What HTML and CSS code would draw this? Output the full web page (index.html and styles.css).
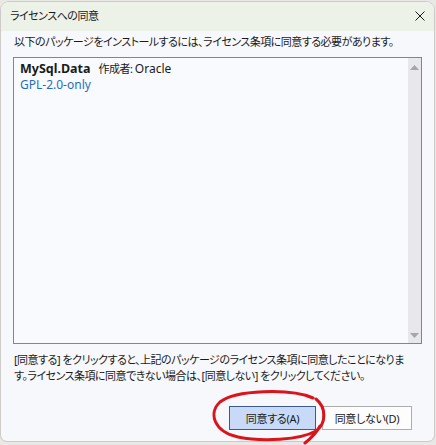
FILE: index.html
```html
<!DOCTYPE html>
<html lang="ja">
<head>
<meta charset="utf-8">
<title>ライセンスへの同意</title>
<link rel="stylesheet" href="styles.css">
</head>
<body>
<div class="dialog">
  <div class="titlebar">
    <span class="title">ライセンスへの同意</span>
    <svg class="close" width="10" height="10" viewBox="0 0 10 10"><path d="M0.5 0.5 L9.5 9.5 M9.5 0.5 L0.5 9.5" stroke="#1b1b1b" stroke-width="1" fill="none"/></svg>
  </div>
  <div class="content">
    <p class="intro">以下のパッケージをインストールするには、ライセンス条項に同意する必要があります。</p>
    <div class="listbox">
      <div class="items">
        <div class="pkg"><span class="pkg-name">MySql.Data</span><span class="pkg-author">作成者:&nbsp;<span class="latin">Oracle</span></span></div>
        <div class="pkg-license">GPL-2.0-only</div>
      </div>
      <div class="scrollbar">
        <svg class="arrow" width="9" height="5" viewBox="0 0 9 5"><path d="M0 5 L4.5 0 L9 5 Z" fill="#a6a6a6"/></svg>
        <svg class="arrow" width="9" height="5" viewBox="0 0 9 5"><path d="M0 0 L4.5 5 L9 0 Z" fill="#a6a6a6"/></svg>
      </div>
    </div>
    <p class="note">[同意する] をクリックすると、上記のパッケージのライセンス条項に同意したことになりま<br>す。ライセンス条項に同意できない場合は、[同意しない] をクリックしてください。</p>
    <div class="buttons">
      <button class="btn btn-primary">同意する(A)</button>
      <button class="btn">同意しない(D)</button>
    </div>
  </div>
</div>
<svg class="scribble" width="436" height="445" viewBox="0 0 436 445">
  <path d="M313 398 C290 388, 235 390, 220 402 C208 413, 214 432, 238 437 C262 442, 300 440, 316 431 C326 424, 327 408, 316 399 M320 426 C316 434, 310 439, 305 443" stroke="#d9141b" stroke-width="3" fill="none" stroke-linecap="round"/>
</svg>
</body>
</html>
```
FILE: styles.css
```css
html, body {
  margin: 0;
  padding: 0;
}
body {
  width: 436px;
  height: 445px;
  background: #e9e8e4;
  position: relative;
  overflow: hidden;
  font-family: "Noto Sans", "Noto Sans CJK JP", sans-serif;
  font-size: 11px;
  letter-spacing: -0.5px;
  color: #1a1a1a;
  font-feature-settings: "palt";
}
.dialog {
  position: absolute;
  left: 1px;
  top: 2px;
  width: 433px;
  height: 439px;
  border-radius: 8px 8px 6px 6px;
  background: #f7f8fc;
  box-shadow: 0 0 0 1px rgba(0,0,0,0.12);
  overflow: hidden;
  display: flex;
  flex-direction: column;
}
.titlebar {
  height: 29px;
  flex: none;
  background: #edf2e9;
  display: flex;
  align-items: center;
  justify-content: space-between;
  padding: 0 9px 0 9px;
}
.title {
  line-height: 16px;
  margin-top: -1px;
}
.close {
  margin-top: -2px;
}
.content {
  flex: 1;
  display: flex;
  flex-direction: column;
  padding: 0 12px 11px 12px;
}
.intro {
  margin: 3px 0 0 0;
  line-height: 16px;
  padding-left: 1px;
  white-space: nowrap;
}
.listbox {
  margin-top: 7px;
  height: 285px;
  border: 1px solid #858585;
  background: #f9fafd;
  display: flex;
}
.items {
  flex: 1;
  padding: 3px 6px;
}
.pkg {
  line-height: 16px;
}
.pkg-name {
  font-size: 12.5px;
  letter-spacing: 0;
  font-weight: bold;
  margin-right: 8px;
}
.latin {
  font-size: 12px;
  letter-spacing: 0;
}
.pkg-license {
  font-size: 12px;
  letter-spacing: 0;
  line-height: 16px;
  color: #1e6fbf;
}
.scrollbar {
  width: 13px;
  background: #e8e8ec;
  display: flex;
  flex-direction: column;
  justify-content: space-between;
  align-items: center;
  padding: 7px 0 5px 0;
}
.note {
  margin: 8px 0 0 0;
  line-height: 16px;
  padding-left: 1px;
  white-space: nowrap;
}
.buttons {
  margin-top: auto;
  display: flex;
  justify-content: flex-end;
  gap: 6px;
  padding-right: 10px;
}
.btn {
  font-family: inherit;
  font-size: 11px;
  letter-spacing: -0.3px;
  font-feature-settings: "palt";
  height: 24px;
  width: 90px;
  padding: 0;
  border: 1px solid #adadad;
  background: #fdfdfd;
  color: #1a1a1a;
  border-radius: 0;
}
.btn-primary {
  width: 87px;
  background: #c8daf8;
  border: 1px solid #3b5a8f;
}
.scribble {
  position: absolute;
  left: 0;
  top: 0;
  pointer-events: none;
}
```
